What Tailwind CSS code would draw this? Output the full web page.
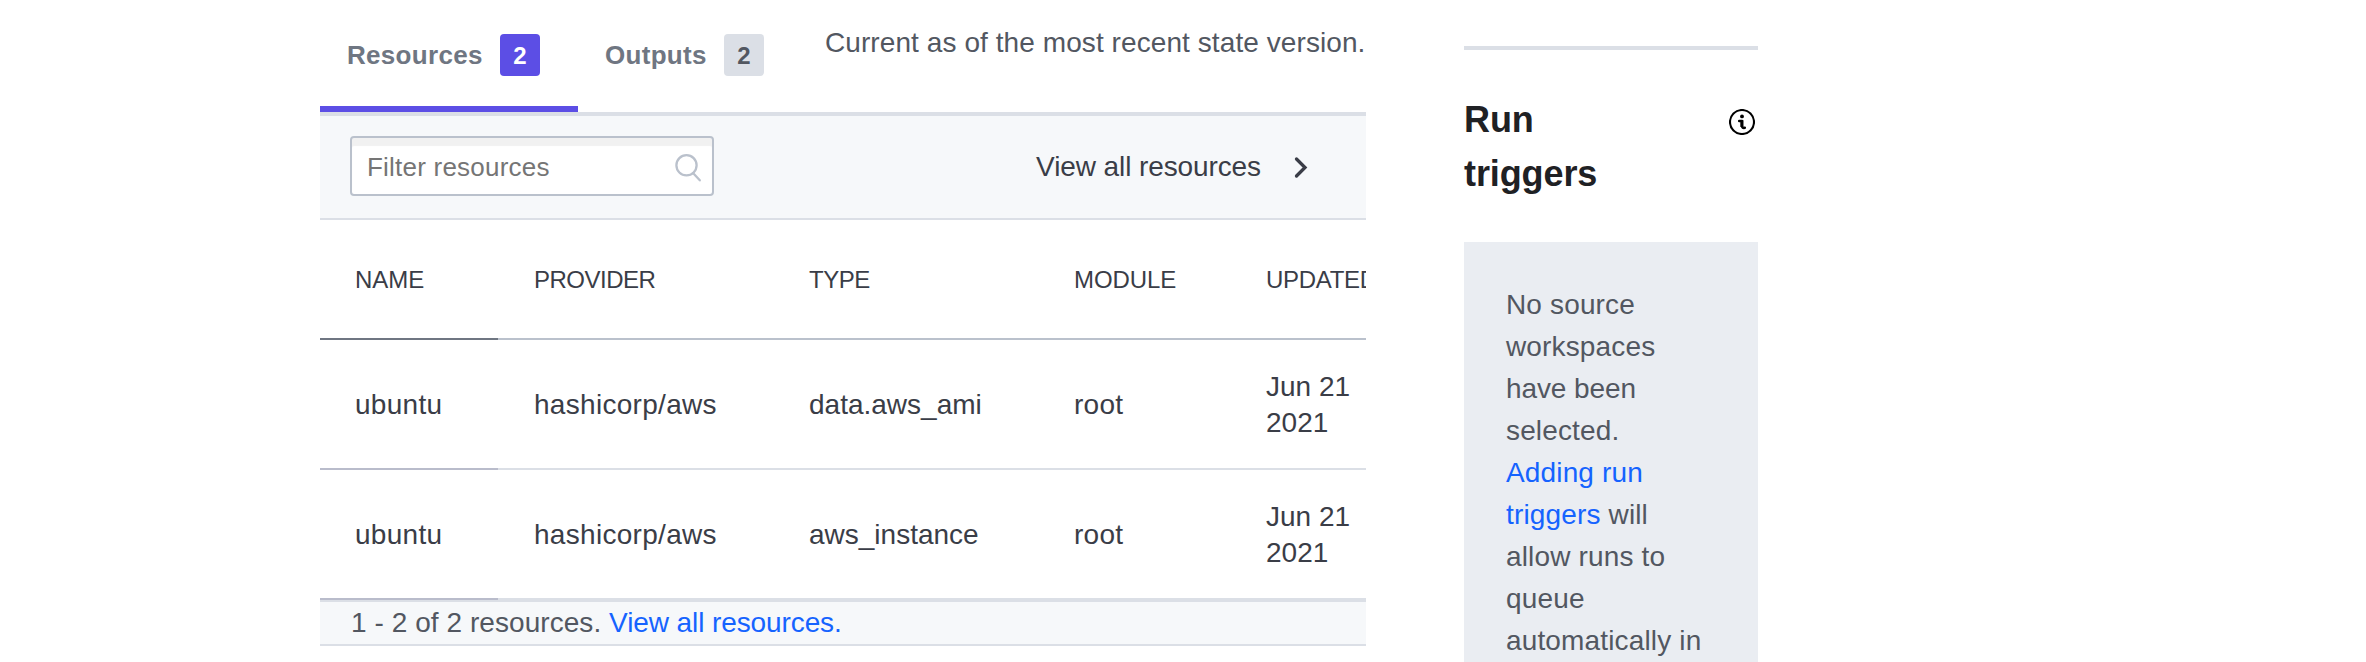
<!DOCTYPE html>
<html lang="en"><head><meta charset="utf-8"><title>Resources</title>
<script src="https://cdn.jsdelivr.net/npm/@tailwindcss/browser@4"></script></head>
<body class="bg-white font-['Liberation_Sans',Arial,sans-serif] text-[28px] text-[#3a3d47]">
<div class="flex h-[662px] overflow-hidden pl-[320px]">
<main class="w-[1046px] shrink-0 overflow-hidden">
<header class="flex h-[116px] border-b-4 border-[#dbdfe6] text-[26px] font-bold text-[#6f7682]">
<div class="flex h-[112px] w-[258px] items-start justify-between border-b-6 border-[#5c4ee5] pr-[38px] pl-[27px] pt-[34px]"><span class="leading-[42px] tracking-[0.3px]">Resources</span><span class="flex h-[42px] w-[40px] items-center justify-center rounded bg-[#5c4ee5] pt-px text-2xl text-white">2</span></div>
<div class="flex h-[112px] w-[247px] items-start justify-between pr-[61px] pl-[27px] pt-[34px]"><span class="leading-[42px] tracking-[0.3px]">Outputs</span><span class="flex h-[42px] w-[40px] items-center justify-center rounded bg-[#dbdfe6] pt-px text-2xl text-[#525761]">2</span></div>
<p class="pt-[22px] text-[28px] leading-[42px] font-normal tracking-[0.08px] whitespace-nowrap text-[#525761]">Current as of the most recent state version.</p>
</header>
<div class="flex h-[104px] items-center justify-between border-b-2 border-[#dbdfe6] bg-[#f6f8fa] pr-[58px] pl-[30px]">
<div class="mb-[2px] flex h-[60px] w-[364px] items-center justify-between rounded border-2 border-[#bac1cc] bg-white pr-[10px] pl-[15px] text-[26px] tracking-[0.22px] text-[#757575] shadow-[inset_0_8px_1px_#f1f1f1]"><span class="pt-[2px]">Filter resources</span>
<svg class="size-7 overflow-visible" viewBox="0 0 28 28" fill="none" stroke="#bac1cc" stroke-width="2.3" stroke-linecap="round"><circle cx="12.5" cy="13.3" r="10.1"/><path d="M19 21l6.8 7.3"/></svg></div>
<div class="flex items-center gap-[31px]"><span class="tracking-[-0.1px]">View all resources</span><svg class="h-6 w-4" viewBox="0 0 16 24" fill="none" stroke="#3a3d47" stroke-width="3.3" stroke-linecap="round"><path d="M4.5 4L13 12.5 4.5 21"/></svg></div>
</div>
<table class="w-[1100px] table-fixed border-separate border-spacing-0 text-left [&_td]:pt-[2px] [&_td]:pl-[36px] [&_th]:pt-[2px] [&_th]:pl-[36px]">
<colgroup><col class="w-[178px]"><col class="w-[275px]"><col class="w-[265px]"><col class="w-[192px]"><col class="w-[190px]"></colgroup>
<thead><tr class="h-[120px] text-2xl *:border-b-2 *:border-[#bac1cc] *:font-normal"><th class="border-[#6f7682]! pl-[35px]!">NAME</th><th class="tracking-[-0.5px]">PROVIDER</th><th class="tracking-[-0.5px]">TYPE</th><th class="tracking-[-0.1px]">MODULE</th><th class="tracking-[-0.3px]">UPDATED</th></tr></thead>
<tbody class="leading-9">
<tr class="h-[130px] *:border-b-2 *:border-[#dbdfe6]"><td class="border-[#b9bccb]! pl-[35px]! tracking-[0.3px]">ubuntu</td><td class="tracking-[0.3px]">hashicorp/aws</td><td>data.aws_ami</td><td class="tracking-[0.3px]">root</td><td>Jun 21<br>2021</td></tr>
<tr class="h-[130px] *:border-b-2 *:border-[#dbdfe6]"><td class="border-[#b9bccb]! pl-[35px]! tracking-[0.3px]">ubuntu</td><td class="tracking-[0.3px]">hashicorp/aws</td><td>aws_instance</td><td class="tracking-[0.3px]">root</td><td>Jun 21<br>2021</td></tr>
</tbody></table>
<footer class="h-[46px] border-y-2 border-[#dbdfe6] bg-[#f6f8fa] pl-[31px] leading-[42px] text-[#525761]"><span class="tracking-[0.06px]">1 - 2 of 2 resources. </span><a class="tracking-[-0.1px] text-[#1563ff]">View all resources.</a></footer>
</main>
<aside class="ml-[98px] w-[294px] shrink-0 pt-[46px]">
<div class="flex h-[196px] justify-between border-t-4 border-[#dbdfe6] pt-[42px] pr-[3px]">
<h2 class="pt-px text-[36px] leading-[54px] font-bold tracking-[-0.1px] text-[#1f2124]">Run<br>triggers</h2>
<svg class="mt-[17px] size-[26px]" viewBox="0 0 26 26"><circle cx="13" cy="13" r="12" fill="none" stroke="#000" stroke-width="2.1"/><circle cx="13" cy="7.4" r="1.9"/><path d="M10.2 12.1H13V17Q13.1 19.4 15.8 18.8" fill="none" stroke="#000" stroke-width="2.5" stroke-linecap="round" stroke-linejoin="round"/><path d="M12.4 11h1.9v7h-2.9v-5z"/></svg></div>
<div class="h-[420px] bg-[#eaedf2] px-[42px] pt-[42px] leading-[42px] tracking-[0.15px] whitespace-nowrap text-[#525761]">No source<br>workspaces<br><span class="tracking-[-0.1px]">have been</span><br>selected.<br><a class="text-[#1563ff]">Adding run<br>triggers</a> will<br>allow runs to<br>queue<br>automatically in</div>
</aside>
</div>
</body></html>
